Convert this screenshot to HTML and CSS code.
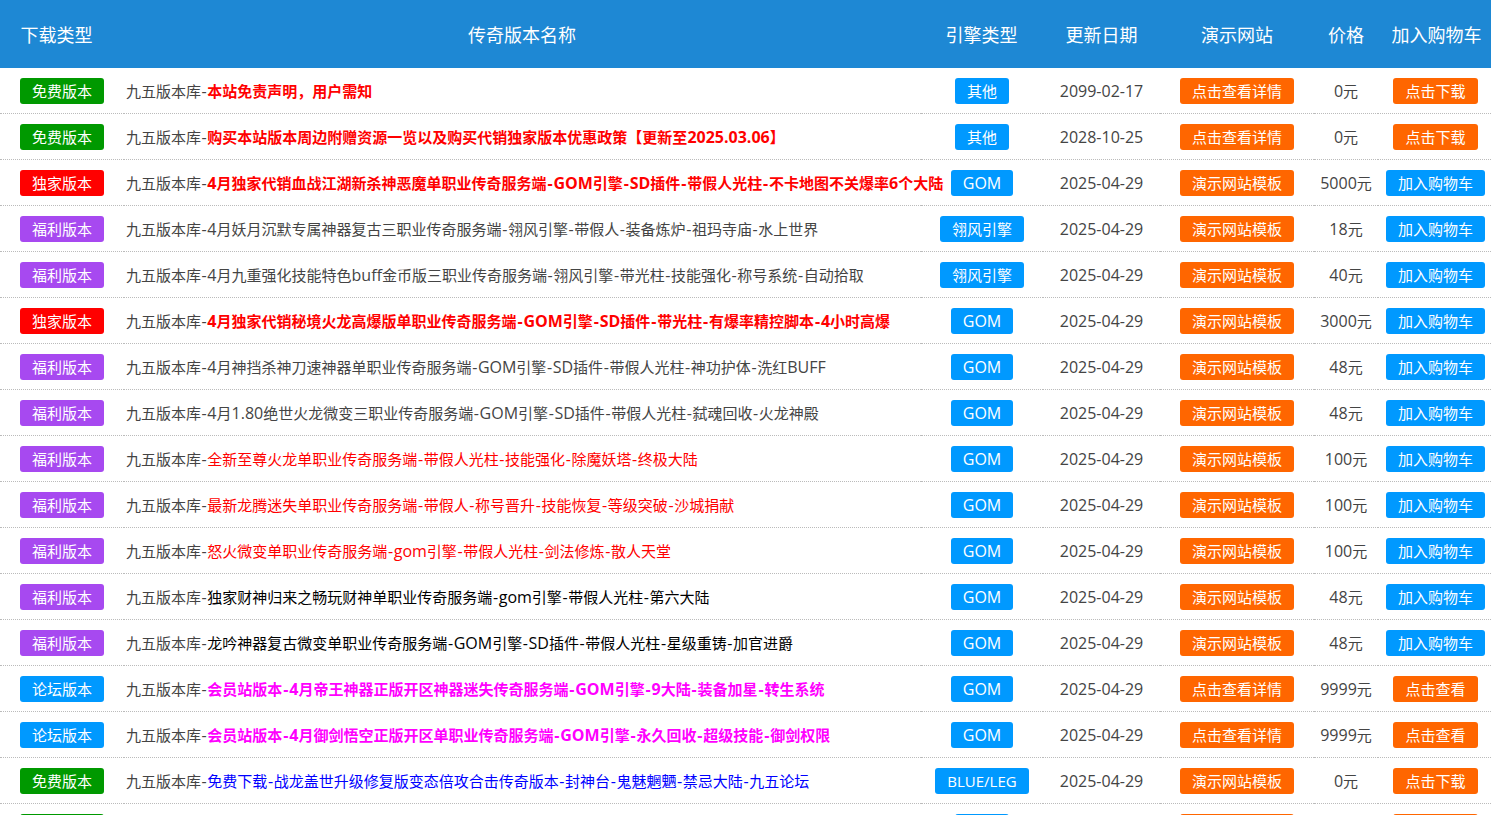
FILE: index.html
```html
<!DOCTYPE html>
<html lang="zh-CN">

<head>
    <meta charset="UTF-8">
    <meta name="viewport" content="width=device-width, initial-scale=1.0">
    <title>传奇版本列表</title>

    <link rel="stylesheet" href="styles.css">

</head>

<body>

    <table class="lista">
        <colgroup>
            <col class="colTipo">
            <col class="colNome">
            <col class="colMotor">
            <col class="colData">
            <col class="colDemo">
            <col class="colPreco">
            <col class="colCarro">
        </colgroup>
        <thead>
            <tr>
                <th>下载类型</th>
                <th>传奇版本名称</th>
                <th>引擎类型</th>
                <th>更新日期</th>
                <th>演示网站</th>
                <th>价格</th>
                <th>加入购物车</th>
            </tr>
        </thead>
        <tbody>
            <tr>
                <td><a class="btn verde">免费版本</a></td>
                <td class="nome">九五版本库<span class="tr">-</span><b class="vermelho">本站免责声明，用户需知</b></td>
                <td><a class="btn azul">其他</a></td>
                <td class="en">2099-02-17</td>
                <td><a class="btn laranja">点击查看详情</a></td>
                <td><span class="en">0</span>元</td>
                <td><a class="btn laranja">点击下载</a></td>
            </tr>
            <tr>
                <td><a class="btn verde">免费版本</a></td>
                <td class="nome">九五版本库<span class="tr">-</span><b class="vermelho">购买本站版本周边附赠资源一览以及购买代销独家版本优惠政策【更新至<span class="en">2025.03.06</span>】</b></td>
                <td><a class="btn azul">其他</a></td>
                <td class="en">2028-10-25</td>
                <td><a class="btn laranja">点击查看详情</a></td>
                <td><span class="en">0</span>元</td>
                <td><a class="btn laranja">点击下载</a></td>
            </tr>
            <tr>
                <td><a class="btn rubro">独家版本</a></td>
                <td class="nome">九五版本库<span class="tr">-</span><b class="vermelho"><span class="en">4</span>月独家代销血战江湖新杀神恶魔单职业传奇服务端<span class="tr">-</span><span class="en">GOM</span>引擎<span class="tr">-</span><span class="en">SD</span>插件<span class="tr">-</span>带假人光柱<span class="tr">-</span>不卡地图不关爆率<span class="en">6</span>个大陆</b></td>
                <td><a class="btn azul en">GOM</a></td>
                <td class="en">2025-04-29</td>
                <td><a class="btn laranja">演示网站模板</a></td>
                <td><span class="en">5000</span>元</td>
                <td><a class="btn azul">加入购物车</a></td>
            </tr>
            <tr>
                <td><a class="btn roxo">福利版本</a></td>
                <td class="nome">九五版本库<span class="tr">-</span><span class="en">4</span>月妖月沉默专属神器复古三职业传奇服务端<span class="tr">-</span>翎风引擎<span class="tr">-</span>带假人<span class="tr">-</span>装备炼炉<span class="tr">-</span>祖玛寺庙<span class="tr">-</span>水上世界</td>
                <td><a class="btn azul">翎风引擎</a></td>
                <td class="en">2025-04-29</td>
                <td><a class="btn laranja">演示网站模板</a></td>
                <td><span class="en">18</span>元</td>
                <td><a class="btn azul">加入购物车</a></td>
            </tr>
            <tr>
                <td><a class="btn roxo">福利版本</a></td>
                <td class="nome">九五版本库<span class="tr">-</span><span class="en">4</span>月九重强化技能特色<span class="en">buff</span>金币版三职业传奇服务端<span class="tr">-</span>翎风引擎<span class="tr">-</span>带光柱<span class="tr">-</span>技能强化<span class="tr">-</span>称号系统<span class="tr">-</span>自动拾取</td>
                <td><a class="btn azul">翎风引擎</a></td>
                <td class="en">2025-04-29</td>
                <td><a class="btn laranja">演示网站模板</a></td>
                <td><span class="en">40</span>元</td>
                <td><a class="btn azul">加入购物车</a></td>
            </tr>
            <tr>
                <td><a class="btn rubro">独家版本</a></td>
                <td class="nome">九五版本库<span class="tr">-</span><b class="vermelho"><span class="en">4</span>月独家代销秘境火龙高爆版单职业传奇服务端<span class="tr">-</span><span class="en">GOM</span>引擎<span class="tr">-</span><span class="en">SD</span>插件<span class="tr">-</span>带光柱<span class="tr">-</span>有爆率精控脚本<span class="tr">-</span><span class="en">4</span>小时高爆</b></td>
                <td><a class="btn azul en">GOM</a></td>
                <td class="en">2025-04-29</td>
                <td><a class="btn laranja">演示网站模板</a></td>
                <td><span class="en">3000</span>元</td>
                <td><a class="btn azul">加入购物车</a></td>
            </tr>
            <tr>
                <td><a class="btn roxo">福利版本</a></td>
                <td class="nome">九五版本库<span class="tr">-</span><span class="en">4</span>月神挡杀神刀速神器单职业传奇服务端<span class="tr">-</span><span class="en">GOM</span>引擎<span class="tr">-</span><span class="en">SD</span>插件<span class="tr">-</span>带假人光柱<span class="tr">-</span>神功护体<span class="tr">-</span>洗红<span class="en">BUFF</span></td>
                <td><a class="btn azul en">GOM</a></td>
                <td class="en">2025-04-29</td>
                <td><a class="btn laranja">演示网站模板</a></td>
                <td><span class="en">48</span>元</td>
                <td><a class="btn azul">加入购物车</a></td>
            </tr>
            <tr>
                <td><a class="btn roxo">福利版本</a></td>
                <td class="nome">九五版本库<span class="tr">-</span><span class="en">4</span>月<span class="en">1.80</span>绝世火龙微变三职业传奇服务端<span class="tr">-</span><span class="en">GOM</span>引擎<span class="tr">-</span><span class="en">SD</span>插件<span class="tr">-</span>带假人光柱<span class="tr">-</span>弑魂回收<span class="tr">-</span>火龙神殿</td>
                <td><a class="btn azul en">GOM</a></td>
                <td class="en">2025-04-29</td>
                <td><a class="btn laranja">演示网站模板</a></td>
                <td><span class="en">48</span>元</td>
                <td><a class="btn azul">加入购物车</a></td>
            </tr>
            <tr>
                <td><a class="btn roxo">福利版本</a></td>
                <td class="nome">九五版本库<span class="tr">-</span><span class="vermelho">全新至尊火龙单职业传奇服务端<span class="tr">-</span>带假人光柱<span class="tr">-</span>技能强化<span class="tr">-</span>除魔妖塔<span class="tr">-</span>终极大陆</span></td>
                <td><a class="btn azul en">GOM</a></td>
                <td class="en">2025-04-29</td>
                <td><a class="btn laranja">演示网站模板</a></td>
                <td><span class="en">100</span>元</td>
                <td><a class="btn azul">加入购物车</a></td>
            </tr>
            <tr>
                <td><a class="btn roxo">福利版本</a></td>
                <td class="nome">九五版本库<span class="tr">-</span><span class="vermelho">最新龙腾迷失单职业传奇服务端<span class="tr">-</span>带假人<span class="tr">-</span>称号晋升<span class="tr">-</span>技能恢复<span class="tr">-</span>等级突破<span class="tr">-</span>沙城捐献</span></td>
                <td><a class="btn azul en">GOM</a></td>
                <td class="en">2025-04-29</td>
                <td><a class="btn laranja">演示网站模板</a></td>
                <td><span class="en">100</span>元</td>
                <td><a class="btn azul">加入购物车</a></td>
            </tr>
            <tr>
                <td><a class="btn roxo">福利版本</a></td>
                <td class="nome">九五版本库<span class="tr">-</span><span class="vermelho">怒火微变单职业传奇服务端<span class="tr">-</span><span class="en">gom</span>引擎<span class="tr">-</span>带假人光柱<span class="tr">-</span>剑法修炼<span class="tr">-</span>散人天堂</span></td>
                <td><a class="btn azul en">GOM</a></td>
                <td class="en">2025-04-29</td>
                <td><a class="btn laranja">演示网站模板</a></td>
                <td><span class="en">100</span>元</td>
                <td><a class="btn azul">加入购物车</a></td>
            </tr>
            <tr>
                <td><a class="btn roxo">福利版本</a></td>
                <td class="nome">九五版本库<span class="tr">-</span><span class="preto">独家财神归来之畅玩财神单职业传奇服务端<span class="tr">-</span><span class="en">gom</span>引擎<span class="tr">-</span>带假人光柱<span class="tr">-</span>第六大陆</span></td>
                <td><a class="btn azul en">GOM</a></td>
                <td class="en">2025-04-29</td>
                <td><a class="btn laranja">演示网站模板</a></td>
                <td><span class="en">48</span>元</td>
                <td><a class="btn azul">加入购物车</a></td>
            </tr>
            <tr>
                <td><a class="btn roxo">福利版本</a></td>
                <td class="nome">九五版本库<span class="tr">-</span><span class="preto">龙吟神器复古微变单职业传奇服务端<span class="tr">-</span><span class="en">GOM</span>引擎<span class="tr">-</span><span class="en">SD</span>插件<span class="tr">-</span>带假人光柱<span class="tr">-</span>星级重铸<span class="tr">-</span>加官进爵</span></td>
                <td><a class="btn azul en">GOM</a></td>
                <td class="en">2025-04-29</td>
                <td><a class="btn laranja">演示网站模板</a></td>
                <td><span class="en">48</span>元</td>
                <td><a class="btn azul">加入购物车</a></td>
            </tr>
            <tr>
                <td><a class="btn azul">论坛版本</a></td>
                <td class="nome">九五版本库<span class="tr">-</span><b class="magenta">会员站版本<span class="tr">-</span><span class="en">4</span>月帝王神器正版开区神器迷失传奇服务端<span class="tr">-</span><span class="en">GOM</span>引擎<span class="tr">-</span><span class="en">9</span>大陆<span class="tr">-</span>装备加星<span class="tr">-</span>转生系统</b></td>
                <td><a class="btn azul en">GOM</a></td>
                <td class="en">2025-04-29</td>
                <td><a class="btn laranja">点击查看详情</a></td>
                <td><span class="en">9999</span>元</td>
                <td><a class="btn laranja">点击查看</a></td>
            </tr>
            <tr>
                <td><a class="btn azul">论坛版本</a></td>
                <td class="nome">九五版本库<span class="tr">-</span><b class="magenta">会员站版本<span class="tr">-</span><span class="en">4</span>月御剑悟空正版开区单职业传奇服务端<span class="tr">-</span><span class="en">GOM</span>引擎<span class="tr">-</span>永久回收<span class="tr">-</span>超级技能<span class="tr">-</span>御剑权限</b></td>
                <td><a class="btn azul en">GOM</a></td>
                <td class="en">2025-04-29</td>
                <td><a class="btn laranja">点击查看详情</a></td>
                <td><span class="en">9999</span>元</td>
                <td><a class="btn laranja">点击查看</a></td>
            </tr>
            <tr>
                <td><a class="btn verde">免费版本</a></td>
                <td class="nome">九五版本库<span class="tr">-</span><span class="anil">免费下载<span class="tr">-</span>战龙盖世升级修复版变态倍攻合击传奇版本<span class="tr">-</span>封神台<span class="tr">-</span>鬼魅魍魉<span class="tr">-</span>禁忌大陆<span class="tr">-</span>九五论坛</span></td>
                <td><a class="btn azul">BLUE/LEG</a></td>
                <td class="en">2025-04-29</td>
                <td><a class="btn laranja">演示网站模板</a></td>
                <td><span class="en">0</span>元</td>
                <td><a class="btn laranja">点击下载</a></td>
            </tr>
            <!-- so a fila de cima dos botoes aparece na imagem -->
            <tr>
                <td><a class="btn verde">免费版本</a></td>
                <td></td>
                <td><a class="btn azul">其他</a></td>
                <td></td>
                <td><a class="btn laranja">演示网站模板</a></td>
                <td></td>
                <td><a class="btn laranja">点击下载</a></td>
            </tr>
        </tbody>
    </table>

</body>

</html>
```

FILE: styles.css
```css
html,
body {
    margin: 0;
    padding: 0;
}

body {
    height: 815px;
    overflow: hidden;
    background-color: #fff;
    font-family: "Open Sans", "Noto Sans CJK SC", sans-serif;
    font-size: 15px;
    color: #444;
}

.lista {
    width: 1491px;
    table-layout: fixed;
    border-collapse: collapse;
}

.colTipo {
    width: 124px;
}

.colNome {
    width: 797px;
}

.colMotor {
    width: 122px;
}

.colData {
    width: 117px;
}

.colDemo {
    width: 154px;
}

.colPreco {
    width: 64px;
}

.colCarro {
    width: 113px;
}

th {
    height: 68px;
    padding: 0;
    background-color: #1e88d4;
    color: #fff;
    font-size: 18px;
    font-weight: normal;
    text-align: center;
    white-space: nowrap;
}

th:first-child {
    padding-right: 11px;
}

th:nth-child(2),
th:nth-child(3) {
    padding-right: 1px;
}

th:last-child {
    padding-left: 4px;
}

td {
    height: 45px;
    padding: 0;
    border-bottom: 1px dotted #bbb;
    text-align: center;
    white-space: nowrap;
}

td:last-child {
    padding-left: 2px;
}

td.nome {
    padding-left: 2px;
    text-align: left;
}

.btn {
    display: inline-block;
    height: 26px;
    line-height: 26px;
    padding: 0 12px;
    border-radius: 3px;
    color: #fff;
    vertical-align: middle;
}

/* letras e numeros um pouco maiores que os caracteres chineses */
.en {
    font-size: 16px;
}

.tr {
    padding: 0 0.6px;
    font-size: 16px;
}

b .tr {
    padding: 0 0.85px;
}

.verde {
    background-color: #009900;
}

.rubro {
    background-color: #ff0000;
}

.roxo {
    background-color: #a749f0;
}

.azul {
    background-color: #0099ff;
}

.laranja {
    background-color: #ff6600;
}

.vermelho {
    color: #ff0000;
}

.magenta {
    color: #ff00ff;
}

.preto {
    color: #000;
}

.anil {
    color: #0000ff;
}
```
